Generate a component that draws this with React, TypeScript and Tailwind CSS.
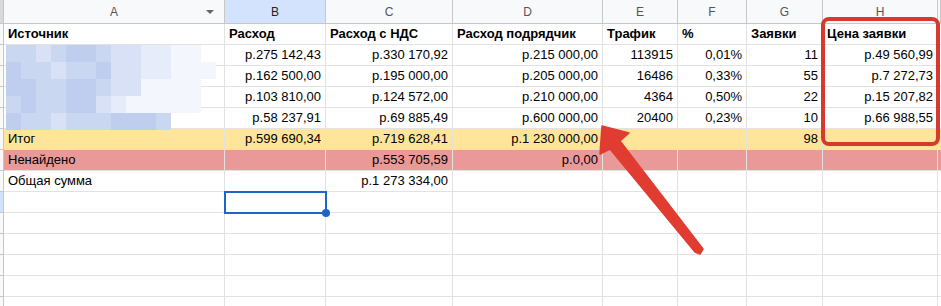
import React from "react";

const wcls = ["w-[4px]", "w-[221px]", "w-[101px]", "w-[127px]", "w-[150px]", "w-[75px]", "w-[69px]", "w-[76px]", "w-[115px]", "w-[3px]"];

type Row = { cells: (string | null)[]; bg?: string; bold?: boolean; sel?: boolean };

const rows: Row[] = [
  { cells: ["Источник", "Расход", "Расход с НДС", "Расход подрядчик", "Трафик", "%", "Заявки", "Цена заявки"], bold: true },
  { cells: ["", "р.275 142,43", "р.330 170,92", "р.215 000,00", "113915", "0,01%", "11", "р.49 560,99"] },
  { cells: ["", "р.162 500,00", "р.195 000,00", "р.205 000,00", "16486", "0,33%", "55", "р.7 272,73"] },
  { cells: ["", "р.103 810,00", "р.124 572,00", "р.210 000,00", "4364", "0,50%", "22", "р.15 207,82"] },
  { cells: ["", "р.58 237,91", "р.69 885,49", "р.600 000,00", "20400", "0,23%", "10", "р.66 988,55"] },
  { cells: ["Итог", "р.599 690,34", "р.719 628,41", "р.1 230 000,00", "", "", "98", ""], bg: "bg-[#ffe599]" },
  { cells: ["Ненайдено", "", "р.553 705,59", "р.0,00", "", "", "", ""], bg: "bg-[#ea9999]" },
  { cells: ["Общая сумма", "", "р.1 273 334,00", "", "", "", "", ""] },
  { cells: ["", "", "", "", "", "", "", ""], sel: true },
  { cells: ["", "", "", "", "", "", "", ""] },
  { cells: ["", "", "", "", "", "", "", ""] },
  { cells: ["", "", "", "", "", "", "", ""] },
  { cells: ["", "", "", "", "", "", "", ""] },
  { cells: ["", "", "", "", "", "", "", ""] },
];

const shades: Record<string, string> = {
  a: "bg-[#bfcdee]",
  b: "bg-[#cad7f1]",
  c: "bg-[#d8e1f6]",
  d: "bg-[#e6ecf9]",
  e: "bg-[#f3f6fc]",
  ".": "bg-transparent",
};

const blur = [
  "bbcbaabccddee.",
  "abbcbbaccddeee",
  "aabbaabcceeee.",
  "babbaacdeeeee.",
  "abbcbbbaaab...",
];

function ColHeader() {
  const letters = ["", "A", "B", "C", "D", "E", "F", "G", "H", ""];
  return (
    <div className="flex h-[24px]">
      {letters.map((l, i) => (
        <div
          key={i}
          className={`${wcls[i]} shrink-0 h-full border-r border-b border-[#c7c7c7] flex items-center justify-center relative text-[12px] ${
            i === 0 ? "bg-[#d9d9d9]" : i === 2 ? "bg-[#d3e3fd] text-[#1f1f1f]" : "bg-[#f8f9fa] text-[#555]"
          }`}
        >
          {l}
          {i === 1 && (
            <span className="absolute right-[10px] top-[10px] w-0 h-0 border-l-[4px] border-r-[4px] border-t-[4px] border-l-transparent border-r-transparent border-t-[#666]" />
          )}
        </div>
      ))}
    </div>
  );
}

export default function App() {
  return (
    <div
      className="relative w-[941px] h-[306px] overflow-hidden bg-white text-black"
      style={{ fontFamily: '"Liberation Sans", Arial, sans-serif' }}
    >
      <ColHeader />
      {rows.map((r, ri) => (
        <div key={ri} className={`flex h-[21px] ${r.bg ?? ""}`}>
          <div className={`w-[4px] shrink-0 h-full border-r border-b border-[#c7c7c7] ${r.sel ? "bg-[#d3e3fd]" : "bg-[#f8f9fa]"}`} />
          {r.cells.map((c, ci) => (
            <div
              key={ci}
              className={`${wcls[ci + 1]} shrink-0 h-full border-r border-b border-[#e2e2e2] flex items-center px-[4px] whitespace-nowrap overflow-hidden text-[13px] ${
                ci === 0 || r.bold ? "justify-start" : "justify-end"
              } ${r.bold ? "font-bold" : ""}`}
            >
              {c}
            </div>
          ))}
          <div className="w-[3px] shrink-0 h-full border-b border-[#e2e2e2]" />
        </div>
      ))}

      {/* pixelated blur over source names */}
      <div className="absolute left-[6px] top-[45px] flex flex-col">
        {blur.map((row, i) => (
          <div key={i} className="flex h-[17px]">
            {row.split("").map((ch, j) => (
              <div key={j} className={`w-[15px] h-full ${shades[ch]}`} />
            ))}
          </div>
        ))}
      </div>

      {/* selected cell */}
      <div className="absolute left-[224px] top-[191px] w-[103px] h-[23px] border-2 border-[#1a66c9]" />
      <div className="absolute left-[322px] top-[209px] w-[8px] h-[8px] rounded-full bg-[#1a66c9]" />

      {/* red highlight box */}
      <div className="absolute left-[821px] top-[17px] w-[119px] h-[129px] border-[4px] border-[#d8392f] rounded-[8px]" />

      {/* arrow */}
      <svg className="absolute left-0 top-0" width="941" height="306" viewBox="0 0 941 306">
        <polygon
          points="602,126 629,133 620,141 703,249 700,254 695,252 610,149 600,154"
          fill="#e03c31"
          stroke="#e03c31"
          strokeWidth="1.5"
          strokeLinejoin="round"
        />
      </svg>
    </div>
  );
}
